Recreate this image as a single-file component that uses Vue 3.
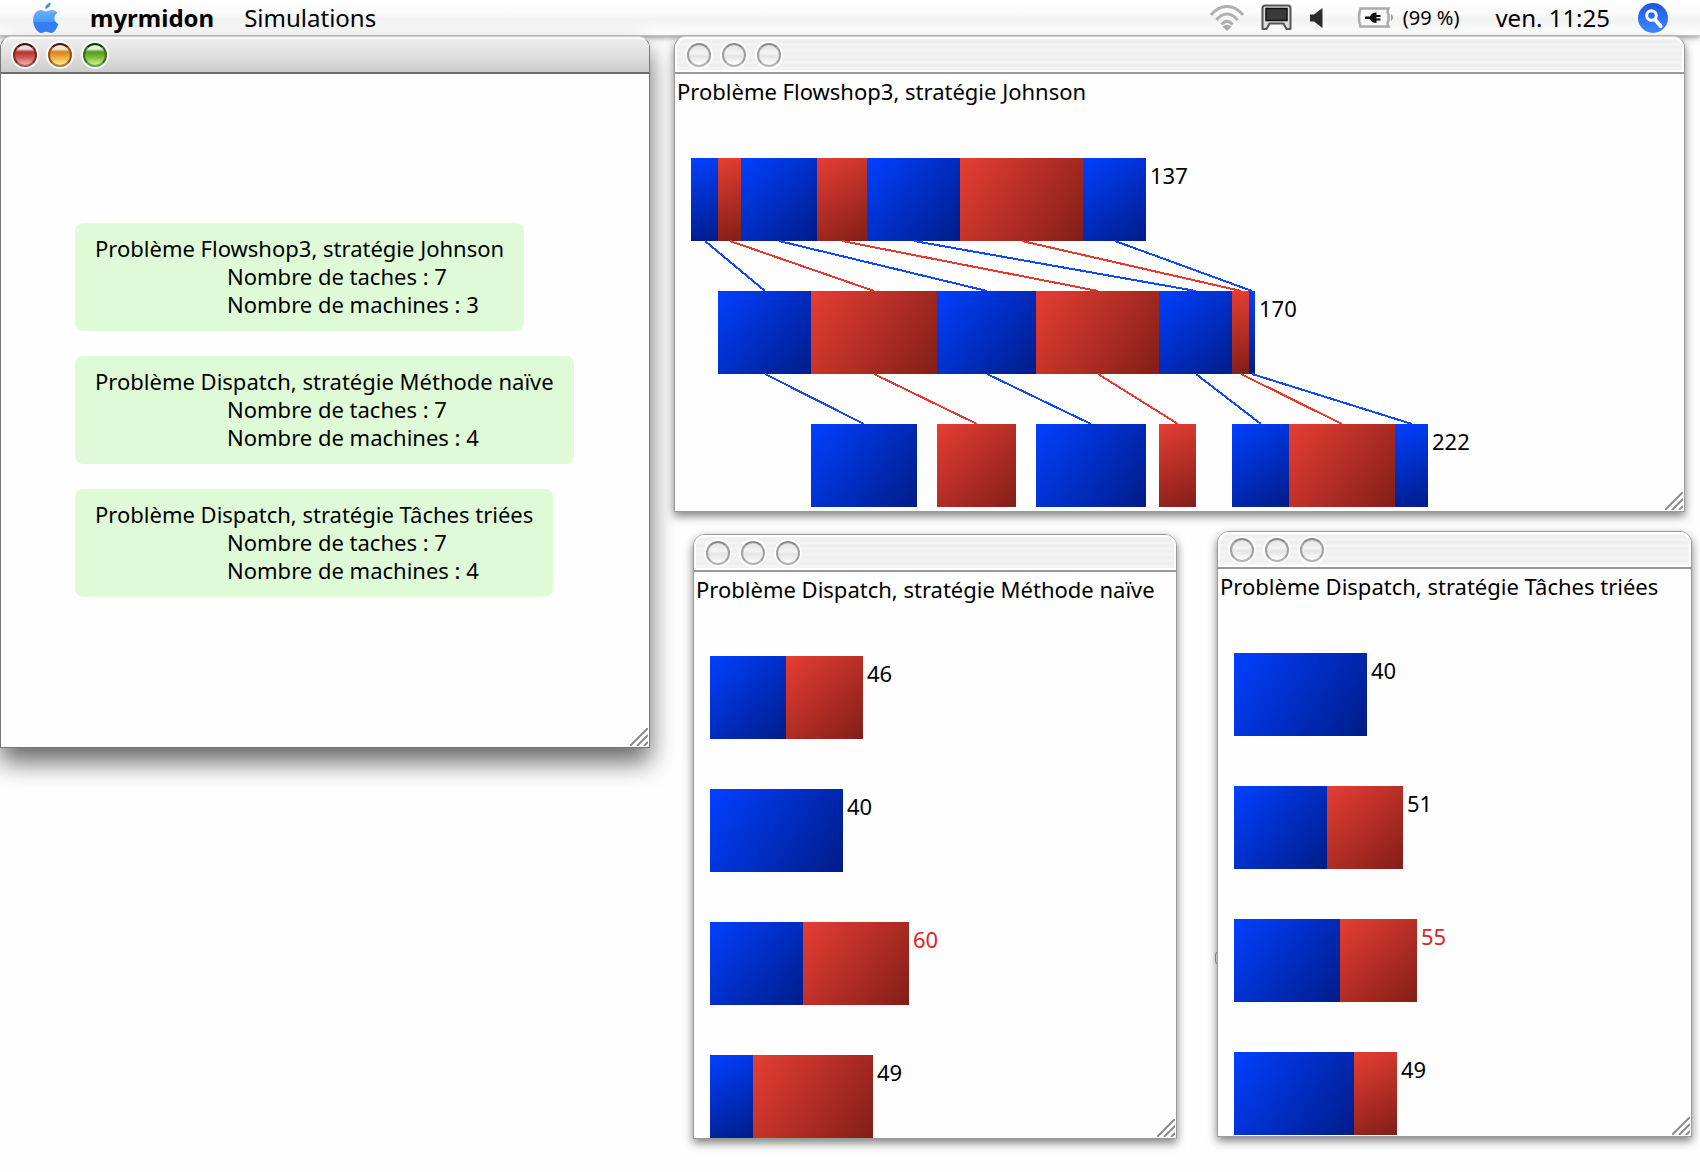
<script setup>
const UNIT = 3.32
const ROW_HEIGHT = 83
const LINK_HEIGHT = 50

const px = (t) => Math.round(t * UNIT)

// Each task is [start, duration, colour]; a row is one machine.
function buildRow(tasks, late = false) {
  let end = 0
  const segments = tasks.map(([start, duration, color]) => {
    const left = px(start)
    const width = px(start + duration) - left
    const segment = {
      color,
      gap: left - px(end),
      width,
      center: Math.round(left + width / 2),
      angle: 90 + (Math.atan2(ROW_HEIGHT, width) * 180) / Math.PI,
    }
    end = start + duration
    return segment
  })
  return { segments, total: end, late, links: [] }
}

function alternate(pairs) {
  return pairs.map(([start, duration], i) => [start, duration, i % 2 ? 'red' : 'blue'])
}

const flowshopRows = [
  buildRow(alternate([[0, 8], [8, 7], [15, 23], [38, 15], [53, 28], [81, 37], [118, 19]])),
  buildRow(alternate([[8, 28], [36, 38], [74, 30], [104, 37], [141, 22], [163, 5], [168, 2]])),
  buildRow(alternate([[36, 32], [74, 24], [104, 33], [141, 11], [163, 17], [180, 32], [212, 10]])),
]
for (let r = 0; r < flowshopRows.length - 1; r++) {
  flowshopRows[r].links = flowshopRows[r].segments.map((s, i) => ({
    color: s.color,
    from: s.center,
    to: flowshopRows[r + 1].segments[i].center,
  }))
}

const charts = [
  { id: 'flowshop', title: 'Problème Flowshop3, stratégie Johnson', rows: flowshopRows },
  {
    id: 'naive',
    title: 'Problème Dispatch, stratégie Méthode naïve',
    rows: [
      buildRow(alternate([[0, 23], [23, 23]])),
      buildRow(alternate([[0, 40]])),
      buildRow(alternate([[0, 28], [28, 32]]), true),
      buildRow(alternate([[0, 13], [13, 36]])),
    ],
  },
  {
    id: 'sorted',
    title: 'Problème Dispatch, stratégie Tâches triées',
    rows: [
      buildRow(alternate([[0, 40]])),
      buildRow(alternate([[0, 28], [28, 23]])),
      buildRow(alternate([[0, 32], [32, 23]]), true),
      buildRow(alternate([[0, 36], [36, 13]])),
    ],
  },
]

const problems = [
  { title: 'Problème Flowshop3, stratégie Johnson', tasks: 7, machines: 3 },
  { title: 'Problème Dispatch, stratégie Méthode naïve', tasks: 7, machines: 4 },
  { title: 'Problème Dispatch, stratégie Tâches triées', tasks: 7, machines: 4 },
]

const controls = [
  { name: 'close', label: 'Fermer' },
  { name: 'minimize', label: 'Réduire' },
  { name: 'zoom', label: 'Agrandir' },
]
</script>

<template>
  <div class="screen">
    <header class="menubar">
      <button class="menu-button apple" type="button" aria-label="Pomme">
        <svg width="28" height="34" viewBox="0 0 28 34">
          <defs>
            <linearGradient id="apple-fill" x1="0" y1="0" x2="0" y2="1">
              <stop offset="0" stop-color="#6db0fb" />
              <stop offset="0.5" stop-color="#4a98fa" />
              <stop offset="0.55" stop-color="#2f7ff6" />
              <stop offset="1" stop-color="#3d86f4" />
            </linearGradient>
          </defs>
          <path d="M13.200 7.800C13 4.600 15.400 2 18.600 1.400c.3 3.200-2.200 6-5.400 6.400z" fill="#3f8df8" />
          <path d="M13.900 10.500c1.600 0 3.300-1.500 6-1.500 2.400 0 4.400 1.100 5.600 2.900-4.600 2.700-3.900 9.100 1 11-1.200 3.300-4 9.100-7.100 9.100-2 0-2.700-1.300-5.200-1.300S11 32 9.100 32C5.500 32 1.100 25.400 1.100 19c0-6.200 3.700-9.900 7.700-9.900 2.300 0 3.600 1.400 5.100 1.400z" fill="url(#apple-fill)" />
        </svg>
      </button>
      <button class="menu-button app-name" type="button">myrmidon</button>
      <button class="menu-button" type="button">Simulations</button>

      <div class="status">
        <svg class="wifi" width="36" height="27" viewBox="0 0 36 27" fill="none" stroke="#b0b0b0" stroke-width="3">
          <path d="M2 11C11-.5 25-.5 34 11" />
          <path d="M7.500 16C13.500 8 22.500 8 28.500 16" />
          <path d="M12.500 20.500C16 16 20 16 23.500 20.500" />
          <path d="M13.500 22.500 18 27l4.500-4.500q-4.500-3.500-9 0z" fill="#a8a8a8" stroke="none" />
        </svg>
        <svg class="display" width="31" height="27" viewBox="0 0 31 27">
          <path d="M4 1.500h23q2.500 0 2.500 2.500v21h-4l-3-5.500h-14L5.500 25h-4V4q0-2.500 2.500-2.500z" fill="#ddd" stroke="#555" stroke-width="2" stroke-linejoin="round" />
          <rect x="5" y="4.500" width="21" height="12" fill="#3a3a3a" stroke="#111" stroke-width="1.500" />
        </svg>
        <svg class="speaker" width="13" height="20" viewBox="0 0 13 20">
          <path d="M0 6.500h4L12.500 0v20L4 13.500H0z" fill="#2c2c2c" />
        </svg>
        <svg class="battery" width="37" height="21" viewBox="0 0 37 21">
          <path d="M3.500 1.500h28q-2 4 0 6v6q-2 2 0 6h-28q-3-9 0-18z" fill="#fafafa" stroke="#aaa" stroke-width="2.500" />
          <path d="M34 7q4 3.500 0 7z" fill="#999" />
          <path d="M8 9.500h5q1.500-4 6.500-4V8h4v2h-4v1.500h4v2h-4V16q-5 0-6.500-4H8z" fill="#111" />
        </svg>
        <span class="percent">(99 %)</span>
        <time class="clock">ven. 11:25</time>
        <button class="menu-button spotlight" type="button" aria-label="Rechercher">
          <svg width="30" height="30" viewBox="0 0 30 30">
            <defs>
              <linearGradient id="spot-fill" x1="0" y1="0" x2="0" y2="1">
                <stop offset="0" stop-color="#1d55dc" />
                <stop offset="0.5" stop-color="#2e6ff2" />
                <stop offset="1" stop-color="#3c8bff" />
              </linearGradient>
            </defs>
            <circle cx="15" cy="15" r="15" fill="url(#spot-fill)" />
            <circle cx="13.500" cy="12.500" r="4.800" fill="none" stroke="#fff" stroke-width="3" />
            <path d="m17 16.500 5.500 6.500" stroke="#fff" stroke-width="4" stroke-linecap="round" />
          </svg>
        </button>
      </div>
    </header>

    <main class="desktop">
      <span class="sliver"></span>

      <section class="window active" aria-label="myrmidon">
        <div class="titlebar">
          <button v-for="c in controls" :key="c.name" type="button" class="light" :class="c.name" :aria-label="c.label"></button>
        </div>
        <ul class="problems">
          <li v-for="p in problems" :key="p.title" class="problem">
            <p>{{ p.title }}</p>
            <p class="detail">Nombre de taches : {{ p.tasks }}</p>
            <p class="detail">Nombre de machines : {{ p.machines }}</p>
          </li>
        </ul>
        <svg class="grip" width="18" height="18" viewBox="0 0 18 18" stroke="#8c8c8c" stroke-width="2">
          <path d="M0 18 18 0M7 18 18 7M14 18l4-4" />
        </svg>
      </section>

      <section v-for="chart in charts" :key="chart.id" class="window" :class="chart.id">
        <div class="titlebar">
          <button v-for="c in controls" :key="c.name" type="button" class="light" :aria-label="c.label"></button>
        </div>
        <h2 class="chart-title">{{ chart.title }}</h2>
        <div class="chart">
          <template v-for="(row, r) in chart.rows" :key="r">
            <div class="row">
              <span
                v-for="(s, i) in row.segments"
                :key="i"
                class="segment"
                :class="s.color"
                :style="{ width: s.width + 'px', marginLeft: s.gap + 'px', '--angle': s.angle + 'deg' }"
              ></span>
              <span class="total" :class="{ late: row.late }">{{ row.total }}</span>
            </div>
            <svg v-if="r < chart.rows.length - 1" class="links" :height="LINK_HEIGHT">
              <line
                v-for="(l, i) in row.links"
                :key="i"
                :class="l.color"
                :x1="l.from"
                y1="0"
                :x2="l.to"
                :y2="LINK_HEIGHT"
              />
            </svg>
          </template>
        </div>
        <svg class="grip" width="18" height="18" viewBox="0 0 18 18" stroke="#8c8c8c" stroke-width="2">
          <path d="M0 18 18 0M7 18 18 7M14 18l4-4" />
        </svg>
      </section>
    </main>
  </div>
</template>

<style>
body {
  margin: 0;
  background: #fefefe;
}
</style>

<style scoped>
.screen {
  display: flex;
  flex-direction: column;
  min-height: 100vh;
  overflow: hidden;
  background: #fefefe;
  color: #000;
  font: 22px/28px "Noto Sans", "Open Sans", sans-serif;
}

.menubar {
  display: flex;
  align-items: center;
  box-sizing: border-box;
  height: 36px;
  padding: 0 32px;
  background: linear-gradient(#fff 0, #fafafa 40%, #f1f1f1 55%, #fdfdfd 90%);
  border-bottom: 1px solid #c4c4c4;
  box-shadow: 0 1px 6px rgba(0, 0, 0, 0.5);
  font-size: 24px;
}

.menu-button {
  margin: 0 30px 0 0;
  padding: 0;
  border: 0;
  background: none;
  color: inherit;
  font: inherit;
}

.menu-button svg {
  display: block;
}

.app-name {
  font-weight: 700;
}

.status {
  display: flex;
  align-items: center;
  margin-left: auto;
}

.wifi {
  margin-right: 16px;
}

.display {
  margin-right: 18px;
}

.speaker {
  margin-right: 34px;
}

.battery {
  margin-right: 9px;
}

.percent {
  margin-right: 36px;
  font-size: 20px;
}

.clock {
  margin-right: 28px;
}

.spotlight {
  margin-right: 0;
}

.desktop {
  position: relative;
  flex: 1;
}

.window {
  position: absolute;
  box-sizing: border-box;
  background: #fefefe;
  border: 1px solid #999;
  border-radius: 12px 12px 0 0;
  box-shadow: 0 4px 10px rgba(0, 0, 0, 0.5);
}

.active {
  top: 0;
  left: 0;
  width: 650px;
  border-color: #777;
  border-top-color: #ccc;
  box-shadow: 0 14px 26px rgba(0, 0, 0, 0.6);
}

.flowshop {
  top: 0;
  left: 674px;
  width: 1011px;
  padding-bottom: 4px;
  border-top-color: #ccc;
}

.naive {
  top: 498px;
  left: 693px;
  width: 484px;
}

.sorted {
  top: 495px;
  left: 1217px;
  width: 475px;
  padding-bottom: 1px;
}

.sliver {
  position: absolute;
  top: 915px;
  left: 1215px;
  width: 8px;
  height: 12px;
  border: 1px solid #999;
  border-radius: 4px;
}

.titlebar {
  display: flex;
  align-items: center;
  gap: 11px;
  box-sizing: border-box;
  height: 37px;
  padding: 0 12px;
  border-bottom: 2px solid #999;
  border-radius: 11px 11px 0 0;
  background: repeating-linear-gradient(#f3f3f3 0 3px, #efefef 3px 6px);
  box-shadow: inset 0 0 0 2px #fff;
}

.active .titlebar {
  border-bottom-color: #6c6c6c;
  background: linear-gradient(#eee, #e2e2e2 45%, #cdcdcd);
  box-shadow: inset 0 2px 0 #f8f8f8;
}

.light {
  box-sizing: border-box;
  width: 24px;
  height: 24px;
  padding: 0;
  border: 2px solid;
  border-color: #8a8a8a #a0a0a0 #b4b4b4;
  border-radius: 50%;
  background: linear-gradient(#e2e2e2, #f4f4f4 40%, #e4e4e4 55%, #fff);
  box-shadow: 0 0 0 2px rgba(255, 255, 255, 0.8);
}

.active .close {
  border-color: #3a1010 #7c2a26 #a05a56;
  background: linear-gradient(#eadada 0 20%, #b5312c 35%, #cc5750 60%, #f5b5ae);
}

.active .minimize {
  border-color: #4c1208 #9a5410 #a58338;
  background: linear-gradient(#f4e8d8 0 20%, #d87f1c 35%, #eba93c 60%, #fdf08e);
}

.active .zoom {
  border-color: #123008 #35701a #6c9a48;
  background: linear-gradient(#e4eedc 0 20%, #4f9a1c 35%, #7cba35 60%, #d2f690);
}

.problems {
  display: flex;
  flex-direction: column;
  align-items: flex-start;
  gap: 25px;
  margin: 0;
  padding: 149px 74px 150px;
  list-style: none;
}

.problem {
  padding: 11px 20px 13px;
  border-radius: 8px;
  background: #dffad7;
}

.problem p {
  margin: 0;
}

.problem .detail {
  padding-left: 132px;
}

.chart-title {
  margin: 0;
  padding: 3px 2px 53px;
  font-size: 22px;
  font-weight: 400;
}

.chart {
  padding-left: 16px;
}

.row {
  display: flex;
  height: 83px;
}

.segment.blue {
  background: linear-gradient(var(--angle), #0040ff, #001c88);
}

.segment.red {
  background: linear-gradient(var(--angle), #e63e32, #821e18);
}

.total {
  margin: 3px 0 0 4px;
}

.late {
  color: #e3231f;
}

.links {
  display: block;
  width: 100%;
  overflow: visible;
  shape-rendering: crispEdges;
}

.links line {
  stroke-width: 2;
}

.links .blue {
  stroke: #0f4cf5;
}

.links .red {
  stroke: #e6392f;
}

.grip {
  position: absolute;
  right: 1px;
  bottom: 1px;
}
</style>
